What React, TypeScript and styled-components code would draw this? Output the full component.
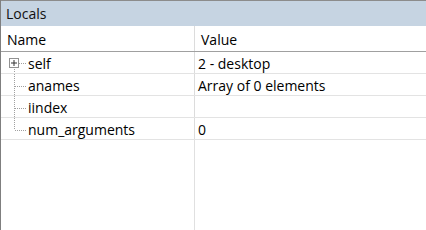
import React from "react";
import styled, { createGlobalStyle } from "styled-components";

const Global = createGlobalStyle`
  html, body { margin: 0; padding: 0; background: #ffffff; }
  body { font-family: "Open Sans", "Noto Sans", "Liberation Sans", sans-serif; color: #000; }
`;

const Panel = styled.div`
  width: 426px;
  height: 230px;
  box-sizing: border-box;
  border-left: 1px solid #7f7f7f;
  display: flex;
  flex-direction: column;
  overflow: hidden;
  background: #fff;
`;

const TitleBar = styled.div`
  height: 26px;
  box-sizing: border-box;
  border-top: 1px solid #8c8c8c;
  background: #c6d4e2;
  padding-left: 5px;
  display: flex;
  align-items: center;
  font-size: 14px;
  color: #111;
`;

const Row = styled.div<{ $header?: boolean }>`
  display: grid;
  grid-template-columns: 194px 1fr;
  height: ${(p) => (p.$header ? 26 : 22)}px;
  box-sizing: border-box;
  border-bottom: 1px solid ${(p) => (p.$header ? "#a0a0a0" : "#e3e3e3")};
  font-size: 14px;
`;

const Cell = styled.div<{ $first?: boolean; $pad?: number }>`
  display: flex;
  align-items: center;
  box-sizing: border-box;
  padding-left: ${(p) => p.$pad ?? 3}px;
  padding-top: 1px;
  border-right: ${(p) => (p.$first ? "1px solid #dcdcdc" : "none")};
  white-space: nowrap;
  overflow: hidden;
  position: relative;
`;

const Filler = styled.div`
  flex: 1;
  display: grid;
  grid-template-columns: 194px 1fr;
`;

const FillerCol = styled.div`
  border-right: 1px solid #e0e0e0;
`;

const Gutter = styled.svg`
  width: 27px;
  height: 22px;
  flex: none;
  display: block;
  margin-top: -1px;
`;

type Kind = "root" | "mid" | "last";

const TreeLines = ({ kind }: { kind: Kind }) => {
  const dot = { stroke: "#a0a0a0", strokeWidth: 1, strokeDasharray: "1 1" };
  if (kind === "root") {
    return (
      <Gutter viewBox="0 0 27 22">
        <rect x="8.5" y="6.5" width="9" height="9" fill="#fff" stroke="#919191" />
        <line x1="10" y1="11" x2="16" y2="11" stroke="#333" />
        <line x1="13" y1="8" x2="13" y2="14" stroke="#333" />
        <line x1="18" y1="11.5" x2="26" y2="11.5" {...dot} />
        <line x1="13.5" y1="17" x2="13.5" y2="22" {...dot} />
      </Gutter>
    );
  }
  return (
    <Gutter viewBox="0 0 27 22">
      <line x1="13.5" y1="0" x2="13.5" y2={kind === "last" ? 12 : 22} {...dot} />
      <line x1="14" y1="12.5" x2="26" y2="12.5" {...dot} />
    </Gutter>
  );
};

const rows: { name: string; value: string; kind: Kind }[] = [
  { name: "self", value: "2 - desktop", kind: "root" },
  { name: "anames", value: "Array of 0 elements", kind: "mid" },
  { name: "iindex", value: "", kind: "mid" },
  { name: "num_arguments", value: "0", kind: "last" },
];

export default function App() {
  return (
    <>
      <Global />
      <Panel>
        <TitleBar>Locals</TitleBar>
        <Row $header>
          <Cell $first $pad={6}>Name</Cell>
          <Cell $pad={6}>Value</Cell>
        </Row>
        {rows.map((r) => (
          <Row key={r.name}>
            <Cell $first $pad={0}>
              <TreeLines kind={r.kind} />
              {r.name}
            </Cell>
            <Cell>{r.value}</Cell>
          </Row>
        ))}
        <Filler>
          <FillerCol />
          <div />
        </Filler>
      </Panel>
    </>
  );
}
